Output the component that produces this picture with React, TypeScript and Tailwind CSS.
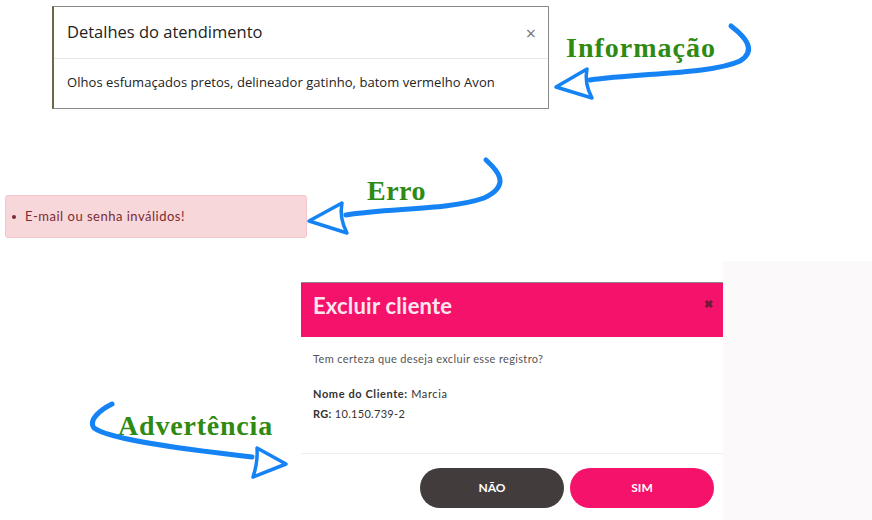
import React from 'react'

const BLUE = '#1683f5'

function Arrows() {
  return (
    <svg className="absolute inset-0 pointer-events-none" width={872} height={520} viewBox="0 0 872 520">
      <g fill="none" stroke={BLUE} strokeLinecap="round" strokeLinejoin="round">
        {/* Informação */}
        <path d="M731 26 C 744 36, 758 50, 740 61 C 712 74, 640 73, 590 80" strokeWidth={5} />
        <path d="M556 87 L587 69 Q 584 83 592 98 Z" strokeWidth={3.5} fill="#fff" />
        {/* Erro */}
        <path d="M486 160 C 497 170, 512 185, 484 198 C 450 210, 390 208, 346 215" strokeWidth={5} />
        <path d="M309 221 L342 203 Q 339 218 347 233 Z" strokeWidth={3.5} fill="#fff" />
        {/* Advertência */}
        <path d="M112 404 C 100 410, 88 420, 94 428 C 110 440, 190 450, 252 457" strokeWidth={5} />
        <path d="M286 464 L257 448 Q 258 462 253 477 Z" strokeWidth={3.5} fill="#fff" />
      </g>
    </svg>
  )
}

export default function App() {
  return (
    <div className="relative w-[872px] h-[520px] bg-white overflow-hidden font-['Lato',sans-serif]">

      {/* Detalhes do atendimento */}
      <div className="pt-[6px] pl-[52px]">
        <div className="w-[497px] h-[103px] border border-[#8a8a8a] border-l-2 border-l-[#6e6646] bg-white font-['Open_Sans',sans-serif]">
          <div className="h-[52px] flex items-center justify-between pl-[13px] pr-[12px] border-b border-[#e6e6e6]">
            <span className="text-[16.5px] text-[#222]">Detalhes do atendimento</span>
            <span className="text-[18px] text-[#777] leading-none">×</span>
          </div>
          <div className="h-[48px] flex items-center pl-[13px]">
            <span className="text-[13px] text-[#222] tracking-[0.05px]">Olhos esfumaçados pretos, delineador gatinho, batom vermelho Avon</span>
          </div>
        </div>
      </div>

      {/* Erro */}
      <div className="mt-[86px] ml-[5px] w-[302px] h-[43px] rounded-[3px] bg-[#f8d7da] border border-[#f5c6cb] flex items-center pl-[6px]">
        <span className="w-[4px] h-[4px] rounded-full bg-[#7b2c33] mr-[9px]" />
        <span className="text-[13px] text-[#7b2c33] tracking-[0.5px]">E-mail ou senha inválidos!</span>
      </div>

      {/* Excluir cliente */}
      <div className="mt-[23px] flex h-[260px]">
        <div className="w-[301px]" />
        <div className="w-[422px] pt-[21px]">
          <div className="h-[55px] border-t border-[#8a8a8a] bg-[#f4126a] flex items-start justify-between pl-[12px] pr-[10px] pt-[9px]">
            <span className="text-[22px] font-bold leading-[28px] text-[#fbe6ee] tracking-[0.2px]">Excluir cliente</span>
            <span className="text-[11px] font-bold text-[#6a1a38] leading-none mt-[6px]">✖</span>
          </div>
          <div className="h-[117px] pl-[12px] pt-[14px] border-b border-[#efefef] text-[11px] text-[#555] tracking-[0.35px]">
            <p className="leading-[16px]">Tem certeza que deseja excluir esse registro?</p>
            <p className="leading-[16px] mt-[19px] text-[#333] tracking-[0.6px]"><span className="font-bold">Nome do Cliente:</span> Marcia</p>
            <p className="leading-[16px] mt-[4px] text-[#333] tracking-[0.3px]"><span className="font-bold">RG:</span> 10.150.739-2</p>
          </div>
          <div className="flex justify-end gap-[6px] pt-[14px] pr-[9px]">
            <button className="w-[144px] h-[40px] rounded-full bg-[#423c3c] text-white text-[12px] font-bold">NÃO</button>
            <button className="w-[144px] h-[40px] rounded-full bg-[#f4126a] text-white text-[12px] font-bold">SIM</button>
          </div>
        </div>
        <div className="flex-1 bg-[#fbf9fa]" />
      </div>

      {/* labels */}
      <span className="absolute left-[566px] top-[34px] font-['Liberation_Serif',serif] font-bold text-[28px] leading-none text-[#2f8a14] tracking-[1px]">Informação</span>
      <span className="absolute left-[367px] top-[177px] font-['Liberation_Serif',serif] font-bold text-[28px] leading-none text-[#2f8a14] tracking-[0.5px]">Erro</span>
      <span className="absolute left-[118px] top-[412px] font-['Liberation_Serif',serif] font-bold text-[28px] leading-none text-[#2f8a14] tracking-[0.8px]">Advertência</span>

      <Arrows />
    </div>
  )
}
